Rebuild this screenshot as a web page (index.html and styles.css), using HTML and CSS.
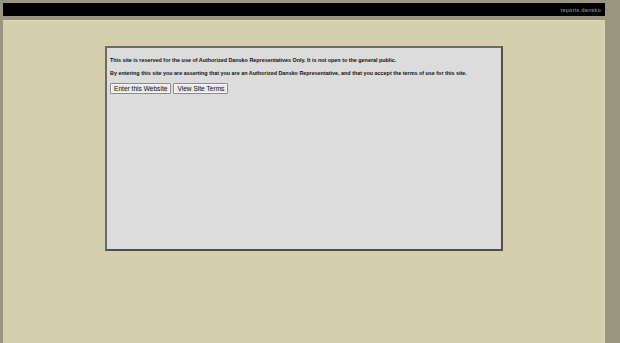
FILE: index.html
```
<!DOCTYPE html>
<html>
<head>
<meta charset="utf-8">
<link rel="stylesheet" href="styles.css">
</head>
<body>
<div class="page">
  <div class="topbar"><span class="site">reports.dansko</span></div>
  <div class="panel">
    <div class="notice">
      <p class="line">This site is reserved for the use of Authorized Dansko Representatives Only. It is not open to the general public.</p>
      <p class="line">By entering this site you are asserting that you are an Authorized Dansko Representative, and that you accept the terms of use for this site.</p>
      <div class="actions">
        <button class="btn">Enter this Website</button>
        <button class="btn">View Site Terms</button>
      </div>
    </div>
  </div>
</div>
</body>
</html>
```
FILE: styles.css
```
html, body {
  margin: 0;
  padding: 0;
  height: 100%;
  overflow: hidden;
  background: #9a967f;
}
.page {
  margin-left: 3px;
  padding-top: 3px;
  width: 602px;
  font-family: "Liberation Sans", Arial, sans-serif;
}
.topbar {
  height: 13px;
  background: #000;
  display: flex;
  justify-content: flex-end;
  align-items: center;
  padding-right: 4px;
}
.site {
  color: #a8a8a8;
  font-size: 5.4px;
  letter-spacing: 0.35px;
}
.panel {
  margin-top: 4px;
  height: 330px;
  background: #d6cfae;
  border-top: 1px solid #ddd8bb;
  border-right: 1px solid #ddd8bb;
  box-sizing: border-box;
  padding-top: 25px;
  padding-left: 102px;
}
.notice {
  width: 398px;
  height: 205px;
  box-sizing: border-box;
  background: #dcdcdc;
  border: 2px solid #4f4f4f;
  border-top-color: #6a6a6a;
  border-left-color: #6a6a6a;
  padding: 9px 3px;
}
.line {
  margin: 0 0 7px 0;
  font-size: 5.4px;
  font-weight: bold;
  color: #111;
  line-height: 6px;
}
.actions {
  display: flex;
  gap: 2px;
  margin-top: 1px;
}
.btn {
  font-family: "Liberation Sans", Arial, sans-serif;
  font-size: 6.6px;
  font-weight: normal;
  color: #111;
  background: #e9e9e9;
  border: 1px solid #8a8a8a;
  border-radius: 1px;
  height: 11px;
  padding: 0 3px;
  line-height: 9px;
  box-shadow: inset 0 0 0 1px #f6f6f6;
}
```
